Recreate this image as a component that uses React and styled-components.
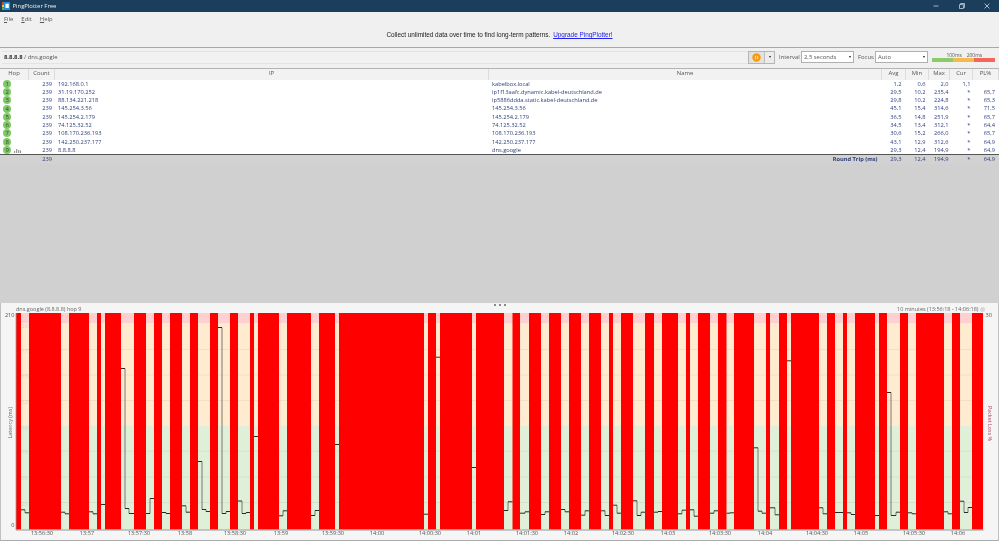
import React from "react";
import styled, { createGlobalStyle } from "styled-components";

const Global = createGlobalStyle`
  html, body { margin: 0; padding: 0; background: #f0f0f0; }
  body { font-family: "Open Sans", "Liberation Sans", sans-serif; font-size: 5.7px; color: #444; }
  * { box-sizing: border-box; }
`;

const Window = styled.div`
  width: 999px; height: 541px; display: flex; flex-direction: column; overflow: hidden;
  filter: blur(0.3px);
`;
const TitleBar = styled.div`
  height: 11.5px; flex: none; background: #1b3e5c; display: flex; align-items: center; padding-left: 2px; color: #e8eef3;
  font-size: 5.9px; gap: 2.5px;
`;
const TitleText = styled.span`flex: 1;`;
const WinControls = styled.div`display: flex; align-items: center; width: 72px; justify-content: space-between; padding: 0 9px 0 6px;`;
const MenuArea = styled.div`
  height: 36px; flex: none; background: #f0f0f0; display: flex; flex-direction: column; border-bottom: 1px solid #a8a8a8;
`;
const MenuBar = styled.div`display: flex; gap: 8px; padding: 3px 0 0 4px; font-size: 5.9px; color: #555; height: 14px;`;
const MenuItem = styled.span`& u { text-decoration: underline; }`;
const Banner = styled.div`
  flex: 1; display: flex; justify-content: center; gap: 3px; padding: 5.5px 0 0 0;
  font-family: "Liberation Sans", Arial, sans-serif; font-size: 6.4px; color: #222;
`;
const UpgradeLink = styled.a`color: #2222ee; text-decoration: underline;`;
const Toolbar = styled.div`
  height: 21px; flex: none; background: #f0f0f0; border-bottom: 1px solid #b4b4b4; padding: 3px 4px 4px 2px;
  display: flex; align-items: center;
`;
const TargetLabel = styled.div`
  flex: 1; height: 13px; line-height: 11.5px; padding-left: 2px; font-size: 5.9px; color: #555;
  border-top: 1px solid #e4e4e4; border-bottom: 1px solid #e4e4e4; background: #f1f1f1;
  & b { color: #333; font-weight: 700; }
`;
const ToolRight = styled.div`display: flex; align-items: center; flex: none; height: 13px;`;
const PauseGroup = styled.div`
  display: flex; width: 27px; height: 13px; border: 1px solid #b5b5b5; background: #e2e2e2; flex: none; margin-right: 4px;
`;
const PauseCell = styled.div`flex: none; width: 16px; display: flex; align-items: center; justify-content: center; border-right: 1px solid #bdbdbd;`;
const CaretCell = styled.div`flex: 1; display: flex; align-items: center; justify-content: center; background: #ececec;`;
const Caret = styled.span`
  display: block; width: 0; height: 0; border-left: 1.7px solid transparent; border-right: 1.7px solid transparent; border-top: 2px solid #222;
`;
const ToolLabel = styled.span`flex: none; font-size: 5.9px; color: #555; width: ${p => p.$w}px;`;
const Select = styled.div`
  flex: none; width: 53px; height: 12.5px; background: #fff; border: 1px solid #b0b0b0; display: flex; align-items: center;
  justify-content: space-between; padding: 0 2px; font-size: 5.9px; color: #555; margin-right: ${p => p.$mr}px;
`;
const Legend = styled.div`flex: none; width: 63px; display: flex; flex-direction: column; margin-left: 1px;`;
const LegendLabels = styled.div`display: flex; justify-content: flex-end; gap: 5px; font-size: 4.9px; color: #555; padding-right: 13px; line-height: 6px;`;
const LegendBar = styled.div`display: flex; height: 3.4px;`;
const LegendPart = styled.span`flex: 1; background: ${p => p.$c};`;

const cols = "29px 26px 434px 393px 24px 23px 21px 23px 26px";
const HeaderRow = styled.div`
  height: 11px; flex: none; display: grid; grid-template-columns: ${cols}; background: #f2f2f2; font-size: 5.9px; color: #555;
`;
const HeadCell = styled.div`
  display: flex; align-items: center; justify-content: center; border-right: 1px solid #dcdcdc; line-height: 1;
`;
const Rows = styled.div`height: 74.5px; flex: none; background: #fff; display: grid; grid-auto-rows: 8.3px;`;
const Row = styled.div`display: grid; grid-template-columns: ${cols}; color: #2d3d7c; line-height: 8.3px; white-space: nowrap;`;
const HopCell = styled.div`display: flex; align-items: center; padding-left: 3.2px; gap: 3.2px;`;
const HopBadge = styled.span`
  width: 8px; height: 8px; border-radius: 50%; background: #80c868; color: #2b4a24; font-size: 6px; text-align: center; line-height: 8px; flex: none;
`;
const Cell = styled.div`
  text-align: ${p => p.$align || "left"}; padding: ${p => p.$pad || "0"};
  ${p => p.$bold ? "font-weight: 700;" : ""}
`;
const Summary = styled.div`
  height: 9.5px; flex: none; background: #d2d2d2; border-top: 1.4px solid #555; display: grid; grid-template-columns: ${cols}; color: #2d3d7c; line-height: 8px; white-space: nowrap;
`;
const Spacer = styled.div`height: 139px; flex: none; background: #d0d0d0;`;
const ChartPane = styled.div`
  flex: 1; background: #f5f5f5; display: flex; flex-direction: column; border-left: 1px solid #c0c0c0; border-right: 1px solid #c0c0c0; border-bottom: 1px solid #aaa; min-height: 0;
`;
const Grip = styled.div`height: 3.5px; flex: none; display: flex; justify-content: center; gap: 3px; align-items: center; padding-top: 1.5px;`;
const GripDot = styled.span`width: 2px; height: 2px; background: #666; border-radius: 50%;`;
const ChartHead = styled.div`
  height: 6.5px; flex: none; display: flex; justify-content: space-between; align-items: center; font-size: 5.5px; color: #666; padding: 0 13px 0 15px;
`;
const Range = styled.span`display: flex; align-items: center; gap: 1.5px;`;
const Chevron = styled.span`
  width: 5px; height: 5px; border-radius: 50%; background: #d8d8d8; display: block; flex: none;
`;
const ChartBody = styled.div`flex: 1; display: flex; min-height: 0;`;
const LeftAxis = styled.div`
  width: 15px; flex: none; display: flex; flex-direction: column; justify-content: space-between; align-items: flex-end; padding: 0 1.5px 3.5px 0; font-size: 5.6px; line-height: 5px; color: #555; height: 219px;
`;
const AxisTitle = styled.span`
  writing-mode: vertical-rl; transform: rotate(180deg); font-size: 5.4px; line-height: 7px; color: #666; align-self: flex-end; white-space: nowrap; margin-right: 0.5px; margin-top: 4px;
`;
const RightAxis = styled.div`
  width: 14px; flex: none; display: flex; flex-direction: column; align-items: flex-start; padding-left: 1.5px; font-size: 5.6px; line-height: 5px; color: #555; height: 219px;
`;
const RightTitle = styled.span`
  writing-mode: vertical-rl; font-size: 5.4px; line-height: 7px; color: #b04060; white-space: nowrap; margin-top: 88px;
`;
const PlotSvg = styled.svg`display: block; flex: none; overflow: visible;`;
const PlotText = styled.text`font-family: "Open Sans", sans-serif; font-size: ${p => p.$s}px; fill: ${p => p.$c};`;

const hops = [
  ["192.168.0.1", "kabelbox.local", "1,2", "0,6", "2,0", "1,1", ""],
  ["31.19.170.252", "ip1f13aafc.dynamic.kabel-deutschland.de", "29,5", "10,2", "235,4", "*", "65,7"],
  ["88.134.221.218", "ip5886ddda.static.kabel-deutschland.de", "29,8", "10,2", "224,8", "*", "65,3"],
  ["145.254.3.56", "145.254.3.56", "45,1", "15,4", "314,6", "*", "71,5"],
  ["145.254.2.179", "145.254.2.179", "36,5", "14,8", "251,9", "*", "65,7"],
  ["74.125.32.52", "74.125.32.52", "34,5", "13,4", "312,1", "*", "64,4"],
  ["108.170.236.193", "108.170.236.193", "30,6", "15,2", "266,0", "*", "65,7"],
  ["142.250.237.177", "142.250.237.177", "43,1", "12,9", "312,6", "*", "64,9"],
  ["8.8.8.8", "dns.google", "29,3", "12,4", "194,9", "*", "64,9"],
];

const bars = [[16,21],[29,61],[69,89],[97,101],[105,121],[134,146],[154,162],[170,182],[190,198],[210,218],[230,238],[250,254],[258,279],[287,311],[319,335],[339,424],[428,436],[440,472],[476,504],[512.5,520],[529,541],[549,561],[569,581],[589,601],[609,613],[621,633],[645,654],[662,678],[686,690],[698,710],[718,726.5],[734,754],[766,770],[779,787],[791,819],[827,835],[843,847],[855,875],[879,887],[900,908],[916,944],[952,960],[972,983]];

const traces = [
  [[21,25,510.3],[25,29,513.3]], [[61,65,512.7],[65,69,514.3]], [[89,93,512.3],[93,97,514.3]], [[101,105,505]],
  [[121,125,369],[125,129,509],[129,134,514]], [[146,150,514],[150,154,499]], [[162,166,513],[166,170,514]],
  [[182,186,506.3],[186,190,512.7]], [[198,202,462],[202,206,510],[206,210,512]], [[218,222,328],[222,226,514],[226,230,512]],
  [[238,242,501.5],[242,246,514],[246,250,513]], [[254,258,437]], [[279,283,516.3],[283,287,511.3]], [[311,315,516],[315,319,511]],
  [[335,339,445]], [[424,428,514.7]], [[436,440,357.7]], [[472,476,468]], [[504,508,511],[508,512.5,502.3]],
  [[520,525,513.7],[525,529,512.3]], [[541,545,515],[545,549,512.3]], [[561,565,510],[565,569,512.3]],
  [[581,585,515.7],[585,589,511.3]], [[601,605,511.3],[605,609,516]], [[613,617,505.7],[617,621,513.7]],
  [[633,637,501.3],[637,641,516],[641,645,512.7]], [[654,658,512.7],[658,662,512]], [[678,682,514.3],[682,686,510.7]],
  [[690,694,510.3],[694,698,516.7]], [[710,714,513.7],[714,718,511.3]], [[726.5,730,513.7],[730,734,513.3]],
  [[754,758,448.3],[758,762,511.7],[762,766,513.7]], [[770,775,508.3],[775,779,515.3]], [[787,791,361.3]],
  [[819,823,508.3],[823,827,514.3]], [[835,843,513]], [[847,851,513.3],[851,855,515]], [[875,879,516]],
  [[887,891,393],[891,896,516],[896,900,512.7]], [[908,912,513.3],[912,916,514.3]], [[944,948,512.3],[948,952,514.3]],
  [[960,964,501.7],[964,968,513],[968,972,508]],
];

const ticks = [[42,"13:56:30"],[87,"13:57"],[139,"13:57:30"],[185,"13:58"],[235,"13:58:30"],[281,"13:59"],[333,"13:59:30"],[377,"14:00"],[430,"14:00:30"],[474,"14:01"],[527,"14:01:30"],[571,"14:02"],[623,"14:02:30"],[668,"14:03"],[720,"14:03:30"],[765,"14:04"],[817,"14:04:30"],[861,"14:05"],[914,"14:05:30"],[958,"14:06"]];
const grid = [[350,"175 ms"],[375.5,"150 ms"],[401,"125 ms"],[451.7,"75 ms"],[477.5,"50 ms"],[503,"25 ms"]];

function Plot() {
  return (
    <PlotSvg width="968" height="226" viewBox="16 313.5 968 226">
      <rect x="16" y="313.5" width="967.5" height="10.5" fill="#ffd0d2" />
      <rect x="16" y="324" width="967.5" height="102" fill="#ffebcf" />
      <rect x="16" y="426" width="967.5" height="104" fill="#e0efd7" />
      {grid.map(([y, t]) => <line key={y} x1="16" x2="983.5" y1={y} y2={y} stroke="#000" strokeOpacity="0.05" strokeWidth="1" />)}
      {[[328,"200 ms"],...grid.map(([y,t])=>[y+3,t]),[430,"100 ms"]].map(([y,t]) => <PlotText key={t} x="21.5" y={y} $s={5.2} $c="#dcd3c0">{t}</PlotText>)}
      {bars.map(([a, b]) => <rect key={a} x={a} y="313.5" width={b - a} height="216.5" fill="#ff0000" />)}
      {traces.map((segs, i) => (
        <g key={i}>
          {segs.slice(1).map((s, j) => <line key={j} x1={s[0]} x2={s[0]} y1={segs[j][2]} y2={s[2]} stroke="#6b6b6b" strokeWidth="0.9" />)}
          {segs.map((s, j) => <line key={j} x1={s[0]} x2={s[1]} y1={s[2]} y2={s[2]} stroke="#2a2a2a" strokeWidth="1" />)}
        </g>
      ))}
      <line x1="16" x2="16" y1="313.5" y2="530.5" stroke="#999" strokeWidth="0.8" />
      <line x1="16" x2="983.5" y1="530.5" y2="530.5" stroke="#999" strokeWidth="1" />
      {ticks.map(([x, t]) => <PlotText key={t} x={x} y="535.6" textAnchor="middle" $s={5.6} $c="#555">{t}</PlotText>)}
    </PlotSvg>
  );
}

function Logo() {
  return (
    <svg width="8" height="8" viewBox="0 0 8 8" style={{ flex: "none" }}>
      <rect x="0" y="0" width="2" height="2.7" fill="#e8402a" />
      <rect x="0" y="2.7" width="2" height="2.6" fill="#f2c230" />
      <rect x="0" y="5.3" width="2" height="2.7" fill="#4cb050" />
      <rect x="2" y="0" width="6" height="8" fill="#1e90e0" />
      <rect x="3.4" y="1.8" width="3.4" height="4.2" rx="0.6" fill="#fff" />
    </svg>
  );
}

export default function App() {
  return (
    <>
      <Global />
      <Window>
        <TitleBar>
          <Logo />
          <TitleText>PingPlotter Free</TitleText>
          <WinControls>
            <svg width="6" height="6" viewBox="0 0 6 6"><path d="M0.5 3h5" stroke="#dfe6ec" strokeWidth="0.7" /></svg>
            <svg width="6" height="6" viewBox="0 0 6 6"><path d="M0.5 1.6h3.9v3.9h-3.9zM1.6 1.6V.5h3.9v3.9h-1.1" fill="none" stroke="#dfe6ec" strokeWidth="0.7" /></svg>
            <svg width="6" height="6" viewBox="0 0 6 6"><path d="M.6.6l4.8 4.8M5.4.6L.6 5.4" stroke="#eef2f5" strokeWidth="0.7" /></svg>
          </WinControls>
        </TitleBar>
        <MenuArea>
          <MenuBar>
            <MenuItem><u>F</u>ile</MenuItem>
            <MenuItem><u>E</u>dit</MenuItem>
            <MenuItem><u>H</u>elp</MenuItem>
          </MenuBar>
          <Banner>
            <span>Collect unlimited data over time to find long-term patterns.</span>
            <UpgradeLink href="#">Upgrade PingPlotter!</UpgradeLink>
          </Banner>
        </MenuArea>
        <Toolbar>
          <TargetLabel><b>8.8.8.8</b> / dns.google</TargetLabel>
          <ToolRight>
            <PauseGroup>
              <PauseCell>
                <svg width="9" height="9" viewBox="0 0 9 9">
                  <circle cx="4.5" cy="4.5" r="4.2" fill="#f59a12" />
                  <path d="M3.4 2.8v3.4M5.6 2.8v3.4" stroke="#ffe9c4" strokeWidth="0.9" />
                </svg>
              </PauseCell>
              <CaretCell><Caret /></CaretCell>
            </PauseGroup>
            <ToolLabel $w={22}>Interval</ToolLabel>
            <Select $mr={4}>2,5 seconds<Caret /></Select>
            <ToolLabel $w={17}>Focus</ToolLabel>
            <Select $mr={3}>Auto<Caret /></Select>
            <Legend>
              <LegendLabels><span>100ms</span><span>200ms</span></LegendLabels>
              <LegendBar>
                <LegendPart $c="#8ccb68" /><LegendPart $c="#f3bb4c" /><LegendPart $c="#f4665a" />
              </LegendBar>
            </Legend>
          </ToolRight>
        </Toolbar>
        <HeaderRow>
          {["Hop", "Count", "IP", "Name", "Avg", "Min", "Max", "Cur", "PL%"].map(h => <HeadCell key={h}>{h}</HeadCell>)}
        </HeaderRow>
        <Rows>
          {hops.map((h, i) => (
            <Row key={i}>
              <HopCell>
                <HopBadge>{i + 1}</HopBadge>
                {i === 8 && (
                  <svg width="7" height="5" viewBox="0 0 7 5"><path d="M.7 5V3M2.7 5V1M4.7 5V2M6.5 5V2.5" stroke="#777" strokeWidth="0.9" /></svg>
                )}
              </HopCell>
              <Cell $align="right" $pad="0 3px 0 0">239</Cell>
              <Cell $pad="0 0 0 3px">{h[0]}</Cell>
              <Cell $pad="0 0 0 3px">{h[1]}</Cell>
              <Cell $align="right" $pad="0 4.5px 0 0">{h[2]}</Cell>
              <Cell $align="right" $pad="0 3.5px 0 0">{h[3]}</Cell>
              <Cell $align="right" $pad="0 1.5px 0 0">{h[4]}</Cell>
              <Cell $align="right" $pad="0 2.5px 0 0">{h[5]}</Cell>
              <Cell $align="right" $pad="0 4px 0 0">{h[6]}</Cell>
            </Row>
          ))}
        </Rows>
        <Summary>
          <Cell />
          <Cell $align="right" $pad="0 3px 0 0">239</Cell>
          <Cell />
          <Cell $align="right" $pad="0 4.5px 0 0" $bold>Round Trip (ms)</Cell>
          <Cell $align="right" $pad="0 4.5px 0 0">29,3</Cell>
          <Cell $align="right" $pad="0 3.5px 0 0">12,4</Cell>
          <Cell $align="right" $pad="0 1.5px 0 0">194,9</Cell>
          <Cell $align="right" $pad="0 2.5px 0 0">*</Cell>
          <Cell $align="right" $pad="0 4px 0 0">64,9</Cell>
        </Summary>
        <Spacer />
        <ChartPane>
          <Grip><GripDot /><GripDot /><GripDot /></Grip>
          <ChartHead>
            <span>dns.google (8.8.8.8) hop 9</span>
            <Range>10 minutes (13:56:18 - 14:06:18)<Chevron /></Range>
          </ChartHead>
          <ChartBody>
            <LeftAxis>
              <span>210</span>
              <AxisTitle>Latency (ms)</AxisTitle>
              <span>0</span>
            </LeftAxis>
            <Plot />
            <RightAxis>
              <span>30</span>
              <RightTitle>Packet Loss %</RightTitle>
            </RightAxis>
          </ChartBody>
        </ChartPane>
      </Window>
    </>
  );
}
